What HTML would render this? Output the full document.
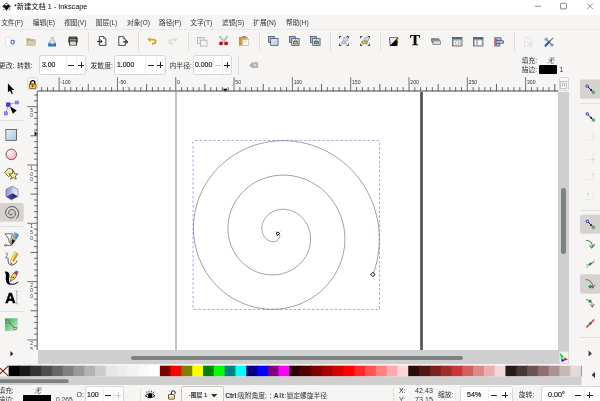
<!DOCTYPE html>
<html lang="zh-CN"><head><meta charset="utf-8"><title>*新建文档 1 - Inkscape</title>
<style>
html,body{margin:0;padding:0;}
body{width:600px;height:401px;overflow:hidden;background:#f6f5f4;font-family:"Liberation Sans","Noto Sans CJK SC",sans-serif;position:relative;}
.t{position:absolute;white-space:nowrap;line-height:10px;height:10px;}
.a{position:absolute;}
.sp{position:absolute;background:#fff;border:0.5px solid #d9d7d5;border-radius:2.4px;box-sizing:border-box;}
.vs{position:absolute;width:0.6px;background:#dfdcd9;}
.hs{position:absolute;height:0.5px;background:#d8d4d0;}
svg{position:absolute;overflow:visible;}
#w{position:absolute;left:0;top:0;width:600px;height:401px;overflow:hidden;will-change:transform;}
</style></head><body><div id="w">

<div class="a" style="left:0;top:0;width:600px;height:14.5px;background:#fff"></div>
<svg style="left:1.5px;top:2px" width="9" height="9" viewBox="0 0 18 18">
<path d="M9 0.8 L1 8.6 Q0.3 10 2 10.6 L5 11.4 Q7 12 5.6 13 Q4.6 14 6.6 14.6 L9 16 L11.6 14.4 Q13 13.6 12 12.8 Q11 11.8 13 11.4 L16 10.6 Q17.8 10 17 8.6 Z" fill="#111"/>
<path d="M9 2.4 L5.2 6 L7 7 L8 6.2 L9.2 7.2 L10.6 6 L12.6 6.6 Z" fill="#fff"/>
<ellipse cx="14.8" cy="14.2" rx="2" ry="1" fill="#111"/><ellipse cx="3.4" cy="14.6" rx="1.6" ry="0.8" fill="#111"/><ellipse cx="9" cy="17.2" rx="1.6" ry="0.7" fill="#111"/>
</svg>
<div class="t " style="left:14px;top:1.5999999999999996px;font-size:7.25px;color:#000;">*新建文档 1 - Inkscape</div>
<svg style="left:0;top:0" width="600" height="15" viewBox="0 0 600 15"><path d="M535 6.3 H541" stroke="#333" stroke-width="0.55"/><rect x="560.5" y="3.3" width="5.9" height="5.6" rx="0.9" fill="none" stroke="#333" stroke-width="0.6"/><path d="M587.2 3.4 L592.9 9.1 M592.9 3.4 L587.2 9.1" stroke="#333" stroke-width="0.55" fill="none"/></svg>
<div class="t " style="left:1.2px;top:17.6px;font-size:6.7px;color:#2e3436;">文件(F)</div>
<div class="t " style="left:32.8px;top:17.6px;font-size:6.7px;color:#2e3436;">编辑(E)</div>
<div class="t " style="left:64.2px;top:17.6px;font-size:6.7px;color:#2e3436;">视图(V)</div>
<div class="t " style="left:95.8px;top:17.6px;font-size:6.7px;color:#2e3436;">图层(L)</div>
<div class="t " style="left:127px;top:17.6px;font-size:6.7px;color:#2e3436;">对象(O)</div>
<div class="t " style="left:159px;top:17.6px;font-size:6.7px;color:#2e3436;">路径(P)</div>
<div class="t " style="left:190.3px;top:17.6px;font-size:6.7px;color:#2e3436;">文字(T)</div>
<div class="t " style="left:222px;top:17.6px;font-size:6.7px;color:#2e3436;">滤镜(S)</div>
<div class="t " style="left:253.3px;top:17.6px;font-size:6.7px;color:#2e3436;">扩展(N)</div>
<div class="t " style="left:286px;top:17.6px;font-size:6.7px;color:#2e3436;">帮助(H)</div>
<div class="hs" style="left:0;top:29px;width:600px;background:#ebe9e7"></div>
<svg style="left:4.800000000000001px;top:36.5px" width="10" height="10" viewBox="0 0 10 10"><path d="M0.5 0.6 H5.2 L7.6 3 V9.2 H0.5 Z" fill="#fff" stroke="#d2d2d2" stroke-width="0.55"/><path d="M5.2 0.6 V3 H7.6" fill="none" stroke="#dadada" stroke-width="0.4"/>
<circle cx="7.7" cy="5.1" r="2.3" fill="#3a6ec4"/><path d="M7.7 3.5 V6.7 M6.1 5.1 H9.3" stroke="#fff" stroke-width="0.85"/></svg>
<svg style="left:25.8px;top:36.5px" width="10" height="10" viewBox="0 0 10 10"><path d="M0.5 1.2 H4 L4.8 2.2 H9.4 V9 H0.5 Z" fill="#c4a77d"/>
<path d="M0.5 9 L1.6 3.8 H9.6 L9.4 9 Z" fill="#d9c3a0"/><rect x="3" y="4.6" width="5" height="2.2" fill="#cfcfcf" opacity="0.8"/></svg>
<svg style="left:46.8px;top:36.5px" width="10" height="10" viewBox="0 0 10 10"><path d="M1.1 5.8 H9 V9.5 H1.1 Z" fill="#3572c6"/><path d="M1.8 5.8 H8.3 V7 H1.8 Z" fill="#6b9be0"/>
<path d="M4.1 0.5 H6.3 V4 H8.2 L5.2 7.4 L2.2 4 H4.1 Z" fill="#e9e9e9" stroke="#9a9a9a" stroke-width="0.55"/></svg>
<svg style="left:67.95px;top:36.4px" width="10" height="10" viewBox="0 0 10 10"><rect x="0.7" y="0.4" width="8.6" height="1.9" rx="0.4" fill="#3a3a3a"/><rect x="2.6" y="0.9" width="4.8" height="0.6" fill="#8a8a8a"/>
<rect x="0.3" y="2.1" width="9.4" height="4.4" rx="0.5" fill="#2b2b2b"/><rect x="1.5" y="2.8" width="7" height="1.7" fill="#909090"/>
<rect x="1.1" y="5" width="7.8" height="4.6" rx="0.4" fill="#2b2b2b"/><rect x="2.2" y="5.5" width="5.6" height="3.3" fill="#f3f7ee"/><rect x="3.4" y="6" width="3.2" height="1.7" fill="#b9dca6"/></svg>
<div class="vs" style="left:87.5px;top:32px;height:19px"></div>
<svg style="left:97.2px;top:36.2px" width="10" height="10" viewBox="0 0 10 10"><path d="M2.4 0.6 H6.8 L8.9 2.7 V9.4 H2.4 Z" fill="#fdfdfd" stroke="#1c1c1c" stroke-width="0.8"/><path d="M6.6 0.8 V2.9 H8.7" fill="none" stroke="#1c1c1c" stroke-width="0.5"/>
<path d="M0 5.4 H5 M3.4 3.7 L5.2 5.4 L3.4 7.1" stroke="#0c0c0c" stroke-width="0.9" fill="none"/></svg>
<svg style="left:117.8px;top:36.2px" width="10" height="10" viewBox="0 0 10 10"><path d="M0.8 0.6 H5.2 L7.3 2.7 V9.4 H0.8 Z" fill="#fdfdfd" stroke="#1c1c1c" stroke-width="0.8"/><path d="M5 0.8 V2.9 H7.1" fill="none" stroke="#1c1c1c" stroke-width="0.5"/>
<path d="M4.8 5.9 H9.6 M8.1 4.2 L9.9 5.9 L8.1 7.6" stroke="#0c0c0c" stroke-width="0.9" fill="none"/></svg>
<div class="vs" style="left:138px;top:32px;height:19px"></div>
<svg style="left:147.0px;top:37.4px" width="10" height="8" viewBox="0 0 10 8"><path d="M0.3 2.6 L3.6 0.2 V1.8 H6.4 Q9.6 1.8 9.6 4.6 Q9.6 7.4 6.4 7.4 H5 V5.6 H6.2 Q7.6 5.6 7.6 4.6 Q7.6 3.6 6.2 3.6 H3.6 V5.2 Z" fill="#d0ac28"/></svg>
<svg style="left:167.8px;top:37.4px" width="10" height="8" viewBox="0 0 10 8"><path d="M9.7 2.6 L6.4 0.2 V1.8 H3.6 Q0.4 1.8 0.4 4.6 Q0.4 7.4 3.6 7.4 H5 V5.6 H3.8 Q2.4 5.6 2.4 4.6 Q2.4 3.6 3.8 3.6 H6.4 V5.2 Z" fill="#d4e6c8"/></svg>
<div class="vs" style="left:187.6px;top:32px;height:19px"></div>
<svg style="left:196.9px;top:36.5px" width="10.4" height="9.4" viewBox="0 0 10.4 9.4"><rect x="0.4" y="0.4" width="6.6" height="6.2" fill="#f1f1f1" stroke="#a4a4a4" stroke-width="0.7"/><path d="M1.8 2 H5.4 M1.8 3.4 H3.4" stroke="#bdbdbd" stroke-width="0.5"/>
<rect x="3.4" y="3.2" width="6.6" height="5.9" fill="#f6f6f6" stroke="#a4a4a4" stroke-width="0.7"/></svg>
<svg style="left:217.5px;top:36.4px" width="11" height="10" viewBox="0 0 11 10"><path d="M1.5 0.4 L6.4 6.2 M9.5 0.4 L4.6 6.2" stroke="#969696" stroke-width="1.7"/><path d="M1.6 0.5 L6.2 6 M9.4 0.5 L4.8 6" stroke="#f0f0f0" stroke-width="0.8"/>
<circle cx="3" cy="7.4" r="1.95" fill="#c20f1e"/><circle cx="8.1" cy="7.4" r="1.95" fill="#c20f1e"/></svg>
<svg style="left:239.2px;top:36.4px" width="10" height="10" viewBox="0 0 10 10"><rect x="0.1" y="0.9" width="8.6" height="8.7" rx="0.6" fill="#dba24e"/><rect x="0.1" y="0.9" width="1.6" height="8.7" fill="#c48a38"/><rect x="3.2" y="0.1" width="3.6" height="2" rx="0.4" fill="#8d8d8d"/>
<rect x="3.4" y="3.3" width="6.4" height="6.2" fill="#fbfbfb" stroke="#9a9a9a" stroke-width="0.45"/><path d="M4.8 5.2 H8.2 M4.8 6.6 H7" stroke="#b8b8b8" stroke-width="0.5"/></svg>
<div class="vs" style="left:258.8px;top:32px;height:19px"></div>
<svg style="left:267.90000000000003px;top:36.300000000000004px" width="10.4" height="9.8" viewBox="0 0 10.4 9.8"><defs><linearGradient id="dpg" x1="0" y1="0" x2="1" y2="1"><stop offset="0" stop-color="#e3ecf6"/><stop offset="1" stop-color="#b4c8e2"/></linearGradient></defs><rect x="0.4" y="0.4" width="5.9" height="6.2" fill="#a7bbd5" stroke="#465264" stroke-width="0.75"/><rect x="2.7" y="2.4" width="7.4" height="7" fill="url(#dpg)" stroke="#465264" stroke-width="0.75"/></svg>
<svg style="left:289.0px;top:36.300000000000004px" width="10.4" height="9.8" viewBox="0 0 10.4 9.8"><defs><linearGradient id="dpg" x1="0" y1="0" x2="1" y2="1"><stop offset="0" stop-color="#e3ecf6"/><stop offset="1" stop-color="#b4c8e2"/></linearGradient></defs><rect x="0.4" y="0.4" width="5.9" height="6.2" fill="#a7bbd5" stroke="#465264" stroke-width="0.75"/><rect x="2.7" y="2.4" width="7.4" height="7" fill="url(#dpg)" stroke="#465264" stroke-width="0.75"/><path d="M5.6 5.6 V4.6 Q6.5 3.4 7.4 4.6 V5.6" stroke="#2a2a2a" stroke-width="0.6" fill="none"/><rect x="4.7" y="5.5" width="3.6" height="2.4" fill="#f0c020" stroke="#2a2a2a" stroke-width="0.5"/></svg>
<svg style="left:310.0px;top:36.300000000000004px" width="10.4" height="9.8" viewBox="0 0 10.4 9.8"><defs><linearGradient id="dpg" x1="0" y1="0" x2="1" y2="1"><stop offset="0" stop-color="#e3ecf6"/><stop offset="1" stop-color="#b4c8e2"/></linearGradient></defs><rect x="0.4" y="0.4" width="5.9" height="6.2" fill="#a7bbd5" stroke="#465264" stroke-width="0.75"/><rect x="2.7" y="2.4" width="7.4" height="7" fill="url(#dpg)" stroke="#465264" stroke-width="0.75"/><path d="M5.6 5.6 V4.6 Q6.5 3.4 7.4 4.6" stroke="#2a2a2a" stroke-width="0.6" fill="none"/><rect x="4.7" y="5.5" width="3.6" height="2.4" fill="#7fc240" stroke="#2a2a2a" stroke-width="0.5"/></svg>
<div class="vs" style="left:330px;top:32px;height:19px"></div>
<svg style="left:338.8px;top:36.4px" width="10" height="10" viewBox="0 0 10 10"><path d="M0.5 2.2 V0.5 H2.2 M7.8 0.5 H9.5 V2.2 M9.5 7.8 V9.5 H7.8 M2.2 9.5 H0.5 V7.8" stroke="#1a1a1a" stroke-width="0.85" fill="none"/><path d="M2.2 8 L3.2 5.2 L5.6 5.8 L8 8 Z" fill="#bfd0e6" stroke="#7088a8" stroke-width="0.45"/><circle cx="6.6" cy="3.4" r="2.3" fill="#c9d8ea" stroke="#7088a8" stroke-width="0.5"/></svg>
<svg style="left:360.4px;top:36.4px" width="10" height="10" viewBox="0 0 10 10"><path d="M0.5 2.2 V0.5 H2.2 M7.8 0.5 H9.5 V2.2 M9.5 7.8 V9.5 H7.8 M2.2 9.5 H0.5 V7.8" stroke="#1a1a1a" stroke-width="0.85" fill="none"/><circle cx="6.5" cy="3.4" r="2.3" fill="#c9d8ea" stroke="#7088a8" stroke-width="0.5"/>
<path d="M2 5 H7.2 V7.8 H2 Z" fill="#f0c830" stroke="#5c4a0a" stroke-width="0.55"/></svg>
<div class="vs" style="left:380px;top:32px;height:19px"></div>
<svg style="left:389.1px;top:36.699999999999996px" width="10.4" height="9.2" viewBox="0 0 10.4 9.2"><defs><linearGradient id="fsg" x1="0" y1="0" x2="1" y2="1"><stop offset="0" stop-color="#fff"/><stop offset="0.7" stop-color="#d8d8d8"/><stop offset="1" stop-color="#777"/></linearGradient></defs>
<path d="M0.3 0.4 H9 L8.4 9 H0.9 Z" fill="#0a0a0a"/><path d="M1.1 1.1 H8.2 L1.5 8.2 Z" fill="url(#fsg)"/>
<path d="M7.4 3 L9.4 0.8 L10.3 1.7 L8.3 3.9 Z" fill="#f0b41e"/><path d="M7.4 3 L8.3 3.9 L6.6 4.6 Z" fill="#222"/></svg>
<div class="t" style="left:410.3px;top:33.7px;font-family:'Liberation Serif',serif;font-weight:bold;font-size:13.6px;line-height:14px;height:14px;color:#0a0a0a;-webkit-text-stroke:0.25px #0a0a0a;transform:scaleX(1.12);transform-origin:0 0">T</div>
<svg style="left:431.2px;top:38.0px" width="10" height="7" viewBox="0 0 10 7"><rect x="0.4" y="0.4" width="7.2" height="3.4" fill="#9c9c9c" stroke="#6a6a6a" stroke-width="0.5"/><rect x="1.2" y="1.6" width="7.4" height="3.4" fill="#bcbcbc" stroke="#666" stroke-width="0.5"/>
<rect x="2" y="2.9" width="7.6" height="3.7" fill="#dadada" stroke="#585858" stroke-width="0.6"/></svg>
<svg style="left:452.0px;top:36.8px" width="10.4" height="9.4" viewBox="0 0 10.4 9.4"><rect x="0.4" y="0.4" width="9.6" height="8.6" fill="#e4e4e4" stroke="#4e4e4e" stroke-width="0.7"/><rect x="0.4" y="0.4" width="9.6" height="2.1" fill="#51647d"/>
<rect x="1.6" y="3.2" width="7.2" height="4.8" fill="#fff" stroke="#777" stroke-width="0.4"/><path d="M4.4 4.4 L3.2 5.6 L4.4 6.8 M6 4.4 L7.2 5.6 L6 6.8" stroke="#333" stroke-width="0.6" fill="none"/></svg>
<svg style="left:472.8px;top:36.8px" width="10.4" height="9.4" viewBox="0 0 10.4 9.4"><rect x="0.4" y="0.4" width="9.6" height="8.6" fill="#e4e4e4" stroke="#4e4e4e" stroke-width="0.7"/><rect x="0.4" y="0.4" width="9.6" height="2.1" fill="#51647d"/>
<rect x="1.4" y="3" width="2.2" height="5.4" fill="#fff" stroke="#666" stroke-width="0.4"/><rect x="4.4" y="3" width="4.6" height="5.4" fill="#fff" stroke="#666" stroke-width="0.4"/></svg>
<svg style="left:494.0px;top:36.7px" width="10" height="9.6" viewBox="0 0 10 9.6"><rect x="0.2" y="0.1" width="1.5" height="9.5" fill="#dc5a68"/>
<rect x="2" y="0.8" width="5" height="2.4" fill="#b9cde2" stroke="#2f4260" stroke-width="0.7"/><rect x="2" y="3.8" width="7.4" height="2.4" fill="#b9cde2" stroke="#2f4260" stroke-width="0.7"/><rect x="2" y="6.8" width="3.8" height="2.2" fill="#b9cde2" stroke="#2f4260" stroke-width="0.7"/></svg>
<div class="vs" style="left:513.6px;top:32px;height:19px"></div>
<svg style="left:523.9px;top:36.5px" width="9" height="10" viewBox="0 0 9 10"><path d="M0.6 0.6 H5.6 L8 3 V9.4 H0.6 Z" fill="#f3f3f3" stroke="#d3d3d3" stroke-width="0.5"/><path d="M3 5 L6 8 M5.8 5.6 Q7.4 6.4 6.4 8" stroke="#cfcfcf" stroke-width="0.9" fill="none"/></svg>
<svg style="left:544.4px;top:36.5px" width="10" height="10" viewBox="0 0 10 10"><path d="M2.4 2.4 L7.8 7.8" stroke="#8e8e8e" stroke-width="1.3"/><circle cx="2" cy="2" r="1.7" fill="#8e8e8e"/><path d="M2 2 L0 1 L1 0 Z" fill="#f6f5f4" stroke="#f6f5f4" stroke-width="0.5"/><circle cx="8" cy="8" r="1.6" fill="#8e8e8e"/>
<path d="M9 0.8 L5 5" stroke="#7e7e7e" stroke-width="1.2"/><path d="M5.2 4.8 L1.6 8.6" stroke="#2f62b5" stroke-width="2.3" stroke-linecap="round"/></svg>
<div class="t " style="left:-1.2px;top:60.5px;font-size:6.9px;color:#2e3436;">更改:</div>
<div class="t " style="left:17.1px;top:60.5px;font-size:6.9px;color:#2e3436;">转数:</div>
<div class="sp" style="left:39.3px;top:55.4px;width:47px;height:19.2px"></div><div class="t " style="left:41.5px;top:60.2px;font-size:7.383000000000001px;color:#15191b;transform:scaleX(0.935);transform-origin:0 50%;-webkit-text-stroke:0.18px #15191b;">3.00</div><div class="vs" style="left:66.2px;top:55.9px;height:18.2px;background:#f0eeec"></div><div class="vs" style="left:76.2px;top:55.9px;height:18.2px;background:#f0eeec"></div><div class="a" style="left:68.3px;top:64.75px;width:6px;height:0.95px;background:#222628"></div><div class="a" style="left:78.2px;top:64.75px;width:6px;height:0.95px;background:#222628"></div><div class="a" style="left:80.73px;top:62.22px;width:0.95px;height:6px;background:#222628"></div>
<div class="t " style="left:90.4px;top:60.5px;font-size:6.9px;color:#2e3436;">发散度:</div>
<div class="sp" style="left:114.4px;top:55.4px;width:51.2px;height:19.2px"></div><div class="t " style="left:116.60000000000001px;top:60.2px;font-size:7.383000000000001px;color:#15191b;transform:scaleX(0.935);transform-origin:0 50%;-webkit-text-stroke:0.18px #15191b;">1.000</div><div class="vs" style="left:145.3px;top:55.9px;height:18.2px;background:#f0eeec"></div><div class="vs" style="left:155.7px;top:55.9px;height:18.2px;background:#f0eeec"></div><div class="a" style="left:147.7px;top:64.75px;width:6px;height:0.95px;background:#222628"></div><div class="a" style="left:157.3px;top:64.75px;width:6px;height:0.95px;background:#222628"></div><div class="a" style="left:159.83px;top:62.22px;width:0.95px;height:6px;background:#222628"></div>
<div class="t " style="left:169.4px;top:60.5px;font-size:6.9px;color:#2e3436;">内半径:</div>
<div class="sp" style="left:193.2px;top:55.4px;width:39.3px;height:19.2px"></div><div class="t " style="left:195.2px;top:60.2px;font-size:7.383000000000001px;color:#15191b;transform:scaleX(0.935);transform-origin:0 50%;-webkit-text-stroke:0.18px #15191b;">0.000</div><div class="vs" style="left:213.2px;top:55.9px;height:18.2px;background:#f0eeec"></div><div class="vs" style="left:222.3px;top:55.9px;height:18.2px;background:#f0eeec"></div><div class="a" style="left:214.7px;top:64.75px;width:6px;height:0.95px;background:#c9c9c9"></div><div class="a" style="left:224.3px;top:64.75px;width:6px;height:0.95px;background:#222628"></div><div class="a" style="left:226.83px;top:62.22px;width:0.95px;height:6px;background:#222628"></div>
<div class="vs" style="left:238.2px;top:56px;height:18.6px"></div>
<svg style="left:248.65px;top:62.349999999999994px" width="9.4" height="6.4" viewBox="0 0 9.4 6.4"><path d="M0.2 3.2 L3 0.3 H8.6 Q9.2 0.3 9.2 0.9 V5.5 Q9.2 6.1 8.6 6.1 H3 Z" fill="#b2b2b2"/><path d="M4.6 1.8 L7.4 4.6 M7.4 1.8 L4.6 4.6" stroke="#f6f5f4" stroke-width="0.8"/></svg>
<div class="t " style="left:521.8px;top:55.7px;font-size:6.7px;color:#2e3436;">填充:</div>
<div class="t " style="left:548px;top:55.5px;font-size:6.7px;color:#2e3436;transform:skewX(-18deg);">无</div>
<div class="t " style="left:521.8px;top:64.6px;font-size:6.7px;color:#2e3436;">描边:</div>
<div class="a" style="left:539px;top:65px;width:18px;height:9.2px;background:#000;border-radius:1px"></div>
<div class="t " style="left:559.4px;top:64.6px;font-size:6.7px;color:#2e3436;">1</div>
<div class="a" style="left:37.6px;top:91.6px;width:520.8px;height:258.54999999999995px;background:#fff"></div>
<div class="a" style="left:27.3px;top:77.3px;width:10.3px;height:13.2px;background:#f9f8f7;border:0.5px solid #ddd9d5;border-radius:1.8px;box-sizing:border-box"></div>
<svg style="left:28.650000000000002px;top:79.64999999999999px" width="7.4" height="8.8" viewBox="0 0 7.4 8.8"><defs><linearGradient id="lkg" x1="0" y1="0" x2="0" y2="1"><stop offset="0" stop-color="#e48a0c"/><stop offset="1" stop-color="#ffe95e"/></linearGradient></defs><path d="M1.5 4.2 V3 A2.2 2.3 0 0 1 5.9 3 V4.2" stroke="#0c0c0c" stroke-width="1.3" fill="none"/><rect x="0.4" y="3.8" width="6.6" height="4.7" rx="0.5" fill="url(#lkg)" stroke="#33270a" stroke-width="0.6"/><rect x="3.3" y="5" width="0.8" height="2.1" fill="#1e1603"/></svg>
<svg style="left:0;top:0;font-family:'Liberation Sans',sans-serif" width="600" height="401" viewBox="0 0 600 401"><path d="M37.6 91.0 H558.4" stroke="#2e3436" stroke-width="0.9"/><path d="M41.63 87.1 V91 M47.46 87.1 V91 M53.29 87.1 V91 M64.95 87.1 V91 M70.78 87.1 V91 M76.61 87.1 V91 M82.45 87.1 V91 M94.11 87.1 V91 M99.94 87.1 V91 M105.77 87.1 V91 M111.60 87.1 V91 M123.27 87.1 V91 M129.10 87.1 V91 M134.93 87.1 V91 M140.76 87.1 V91 M152.42 87.1 V91 M158.26 87.1 V91 M164.09 87.1 V91 M169.92 87.1 V91 M181.58 87.1 V91 M187.41 87.1 V91 M193.24 87.1 V91 M199.08 87.1 V91 M210.74 87.1 V91 M216.57 87.1 V91 M222.40 87.1 V91 M228.23 87.1 V91 M239.90 87.1 V91 M245.73 87.1 V91 M251.56 87.1 V91 M257.39 87.1 V91 M269.05 87.1 V91 M274.89 87.1 V91 M280.72 87.1 V91 M286.55 87.1 V91 M298.21 87.1 V91 M304.04 87.1 V91 M309.87 87.1 V91 M315.71 87.1 V91 M327.37 87.1 V91 M333.20 87.1 V91 M339.03 87.1 V91 M344.86 87.1 V91 M356.53 87.1 V91 M362.36 87.1 V91 M368.19 87.1 V91 M374.02 87.1 V91 M385.68 87.1 V91 M391.52 87.1 V91 M397.35 87.1 V91 M403.18 87.1 V91 M414.84 87.1 V91 M420.67 87.1 V91 M426.50 87.1 V91 M432.34 87.1 V91 M444.00 87.1 V91 M449.83 87.1 V91 M455.66 87.1 V91 M461.49 87.1 V91 M473.16 87.1 V91 M478.99 87.1 V91 M484.82 87.1 V91 M490.65 87.1 V91 M502.31 87.1 V91 M508.15 87.1 V91 M513.98 87.1 V91 M519.81 87.1 V91 M531.47 87.1 V91 M537.30 87.1 V91 M543.13 87.1 V91 M548.97 87.1 V91" stroke="#2e3436" stroke-width="0.7"/><path d="M88.28 84 V91 M146.59 84 V91 M204.91 84 V91 M263.22 84 V91 M321.54 84 V91 M379.85 84 V91 M438.17 84 V91 M496.48 84 V91 M554.80 84 V91" stroke="#2e3436" stroke-width="0.75"/><path d="M59.12 77.2 V91 M117.44 77.2 V91 M175.75 77.2 V91 M234.06 77.2 V91 M292.38 77.2 V91 M350.69 77.2 V91 M409.01 77.2 V91 M467.32 77.2 V91 M525.64 77.2 V91" stroke="#3a4042" stroke-width="0.72"/><text x="60.42" y="83.6" font-size="5.9" fill="#2e3436" textLength="10.27" lengthAdjust="spacingAndGlyphs">-100</text><text x="118.73" y="83.6" font-size="5.9" fill="#2e3436" textLength="7.42" lengthAdjust="spacingAndGlyphs">-50</text><text x="177.05" y="83.6" font-size="5.9" fill="#2e3436" textLength="2.85" lengthAdjust="spacingAndGlyphs">0</text><text x="235.37" y="83.6" font-size="5.9" fill="#2e3436" textLength="5.71" lengthAdjust="spacingAndGlyphs">50</text><text x="293.68" y="83.6" font-size="5.9" fill="#2e3436" textLength="8.56" lengthAdjust="spacingAndGlyphs">100</text><text x="352.00" y="83.6" font-size="5.9" fill="#2e3436" textLength="8.56" lengthAdjust="spacingAndGlyphs">150</text><text x="410.31" y="83.6" font-size="5.9" fill="#2e3436" textLength="8.56" lengthAdjust="spacingAndGlyphs">200</text><text x="468.62" y="83.6" font-size="5.9" fill="#2e3436" textLength="8.56" lengthAdjust="spacingAndGlyphs">250</text><text x="526.94" y="83.6" font-size="5.9" fill="#2e3436" textLength="8.56" lengthAdjust="spacingAndGlyphs">300</text><path d="M37.2 91.1 V350.15" stroke="#4a5052" stroke-width="0.9"/><path d="M34 95.00 H37.4 M34 100.83 H37.4 M34 112.50 H37.4 M34 118.33 H37.4 M34 124.16 H37.4 M34 129.99 H37.4 M34 141.65 H37.4 M34 147.49 H37.4 M34 153.32 H37.4 M34 159.15 H37.4 M34 170.81 H37.4 M34 176.64 H37.4 M34 182.47 H37.4 M34 188.31 H37.4 M34 199.97 H37.4 M34 205.80 H37.4 M34 211.63 H37.4 M34 217.46 H37.4 M34 229.13 H37.4 M34 234.96 H37.4 M34 240.79 H37.4 M34 246.62 H37.4 M34 258.28 H37.4 M34 264.12 H37.4 M34 269.95 H37.4 M34 275.78 H37.4 M34 287.44 H37.4 M34 293.27 H37.4 M34 299.10 H37.4 M34 304.94 H37.4 M34 316.60 H37.4 M34 322.43 H37.4 M34 328.26 H37.4 M34 334.09 H37.4 M34 345.76 H37.4" stroke="#2e3436" stroke-width="0.7"/><path d="M30.6 135.82 H37.4 M30.6 194.14 H37.4 M30.6 252.45 H37.4 M30.6 310.77 H37.4" stroke="#2e3436" stroke-width="0.75"/><path d="M27.3 106.66 H37.4 M27.3 164.98 H37.4 M27.3 223.29 H37.4 M27.3 281.61 H37.4 M27.3 339.93 H37.4" stroke="#3a4042" stroke-width="0.72"/><text x="31.5" y="111.56" font-size="4.9" fill="#2e3436" text-anchor="middle">5</text><text x="31.5" y="117.36" font-size="4.9" fill="#2e3436" text-anchor="middle">0</text><text x="31.5" y="169.88" font-size="4.9" fill="#2e3436" text-anchor="middle">1</text><text x="31.5" y="175.68" font-size="4.9" fill="#2e3436" text-anchor="middle">0</text><text x="31.5" y="181.48" font-size="4.9" fill="#2e3436" text-anchor="middle">0</text><text x="31.5" y="228.19" font-size="4.9" fill="#2e3436" text-anchor="middle">1</text><text x="31.5" y="234.00" font-size="4.9" fill="#2e3436" text-anchor="middle">5</text><text x="31.5" y="239.79" font-size="4.9" fill="#2e3436" text-anchor="middle">0</text><text x="31.5" y="286.51" font-size="4.9" fill="#2e3436" text-anchor="middle">2</text><text x="31.5" y="292.31" font-size="4.9" fill="#2e3436" text-anchor="middle">0</text><text x="31.5" y="298.11" font-size="4.9" fill="#2e3436" text-anchor="middle">0</text><text x="31.5" y="344.82" font-size="4.9" fill="#2e3436" text-anchor="middle">2</text><text x="31.5" y="350.62" font-size="4.9" fill="#2e3436" text-anchor="middle">5</text><text x="31.5" y="356.43" font-size="4.9" fill="#2e3436" text-anchor="middle">0</text><path d="M222.84 88.8 H227.64 L225.24 91.4 Z" fill="#000"/><path d="M34.6 131.26 V136.06 L37.3 133.66 Z" fill="#000"/></svg>
<div class="a" style="left:0;top:349.75px;width:37.6px;height:14.6px;background:#f6f5f4"></div>
<div class="a" style="left:175.2px;top:91.6px;width:1.7px;height:258.54999999999995px;background:#c4c4c4"></div>
<div class="a" style="left:420.1px;top:91.6px;width:2.6px;height:258.54999999999995px;background:linear-gradient(90deg,#9a9a9a,#505050 28%,#505050 72%,#9a9a9a)"></div>
<svg style="left:0;top:0" width="600" height="401" viewBox="0 0 600 401"><path d="M277.80 233.60 L277.93 233.66 L278.06 233.73 L278.18 233.80 L278.30 233.88 L278.42 233.97 L278.53 234.06 L278.64 234.16 L278.74 234.26 L278.84 234.37 L278.93 234.49 L279.02 234.61 L279.10 234.74 L279.18 234.87 L279.24 235.00 L279.31 235.14 L279.37 235.29 L279.42 235.44 L279.46 235.59 L279.50 235.74 L279.53 235.90 L279.55 236.07 L279.56 236.23 L279.57 236.40 L279.57 236.57 L279.56 236.74 L279.55 236.91 L279.52 237.08 L279.49 237.26 L279.45 237.43 L279.41 237.61 L279.35 237.78 L279.29 237.96 L279.21 238.13 L279.13 238.31 L279.05 238.48 L278.95 238.65 L278.85 238.82 L278.73 238.99 L278.61 239.15 L278.48 239.31 L278.35 239.47 L278.20 239.63 L278.05 239.78 L277.89 239.93 L277.72 240.07 L277.55 240.21 L277.37 240.35 L277.18 240.48 L276.98 240.60 L276.78 240.72 L276.57 240.83 L276.35 240.94 L276.13 241.04 L275.90 241.13 L275.66 241.22 L275.42 241.30 L275.17 241.37 L274.92 241.43 L274.67 241.49 L274.40 241.54 L274.14 241.58 L273.87 241.61 L273.59 241.63 L273.31 241.64 L273.03 241.64 L272.74 241.64 L272.46 241.62 L272.16 241.60 L271.87 241.56 L271.58 241.52 L271.28 241.46 L270.98 241.40 L270.68 241.32 L270.38 241.24 L270.08 241.14 L269.78 241.03 L269.48 240.92 L269.18 240.79 L268.88 240.65 L268.59 240.50 L268.29 240.34 L268.00 240.17 L267.71 239.99 L267.42 239.79 L267.14 239.59 L266.86 239.38 L266.58 239.15 L266.31 238.92 L266.04 238.67 L265.78 238.42 L265.52 238.15 L265.27 237.87 L265.03 237.59 L264.79 237.29 L264.56 236.98 L264.33 236.67 L264.11 236.34 L263.91 236.01 L263.71 235.66 L263.51 235.31 L263.33 234.95 L263.16 234.58 L262.99 234.20 L262.84 233.82 L262.69 233.42 L262.56 233.02 L262.44 232.61 L262.32 232.20 L262.22 231.78 L262.13 231.35 L262.06 230.92 L261.99 230.48 L261.94 230.03 L261.90 229.58 L261.87 229.13 L261.85 228.67 L261.85 228.21 L261.86 227.75 L261.89 227.28 L261.93 226.81 L261.98 226.33 L262.05 225.86 L262.13 225.38 L262.22 224.90 L262.33 224.43 L262.45 223.95 L262.59 223.47 L262.74 222.99 L262.91 222.52 L263.09 222.04 L263.29 221.57 L263.50 221.10 L263.73 220.63 L263.97 220.17 L264.23 219.70 L264.50 219.25 L264.78 218.80 L265.08 218.35 L265.40 217.91 L265.72 217.48 L266.07 217.05 L266.42 216.63 L266.80 216.21 L267.18 215.81 L267.58 215.41 L267.99 215.02 L268.42 214.64 L268.86 214.27 L269.31 213.91 L269.77 213.56 L270.25 213.23 L270.74 212.90 L271.24 212.58 L271.76 212.28 L272.28 211.99 L272.82 211.71 L273.36 211.45 L273.92 211.20 L274.49 210.96 L275.06 210.74 L275.65 210.53 L276.24 210.34 L276.85 210.17 L277.46 210.00 L278.08 209.86 L278.70 209.73 L279.34 209.62 L279.98 209.52 L280.62 209.45 L281.28 209.39 L281.93 209.34 L282.59 209.32 L283.26 209.31 L283.93 209.33 L284.60 209.36 L285.28 209.40 L285.95 209.47 L286.63 209.56 L287.31 209.66 L287.99 209.79 L288.67 209.93 L289.35 210.10 L290.03 210.28 L290.70 210.48 L291.38 210.70 L292.05 210.95 L292.72 211.21 L293.38 211.49 L294.04 211.79 L294.70 212.11 L295.34 212.45 L295.99 212.80 L296.62 213.18 L297.25 213.58 L297.87 213.99 L298.48 214.43 L299.09 214.88 L299.68 215.35 L300.26 215.84 L300.83 216.35 L301.40 216.87 L301.94 217.42 L302.48 217.98 L303.01 218.56 L303.52 219.15 L304.01 219.76 L304.49 220.39 L304.96 221.03 L305.41 221.69 L305.85 222.36 L306.27 223.05 L306.67 223.75 L307.06 224.47 L307.42 225.20 L307.77 225.94 L308.10 226.70 L308.42 227.47 L308.71 228.24 L308.98 229.03 L309.23 229.84 L309.46 230.65 L309.67 231.47 L309.86 232.30 L310.03 233.13 L310.17 233.98 L310.30 234.83 L310.40 235.69 L310.47 236.56 L310.53 237.43 L310.56 238.30 L310.57 239.18 L310.55 240.07 L310.51 240.95 L310.45 241.84 L310.36 242.73 L310.24 243.62 L310.11 244.52 L309.95 245.41 L309.76 246.30 L309.55 247.19 L309.31 248.07 L309.05 248.96 L308.77 249.84 L308.46 250.71 L308.12 251.58 L307.76 252.45 L307.38 253.30 L306.97 254.15 L306.54 255.00 L306.08 255.83 L305.60 256.66 L305.10 257.47 L304.57 258.27 L304.02 259.07 L303.44 259.85 L302.84 260.61 L302.22 261.37 L301.58 262.11 L300.91 262.83 L300.23 263.54 L299.52 264.24 L298.79 264.92 L298.04 265.58 L297.27 266.22 L296.48 266.84 L295.67 267.45 L294.84 268.03 L293.99 268.60 L293.13 269.14 L292.25 269.66 L291.35 270.16 L290.43 270.64 L289.50 271.10 L288.55 271.53 L287.59 271.94 L286.62 272.32 L285.63 272.68 L284.63 273.01 L283.62 273.32 L282.59 273.60 L281.56 273.86 L280.51 274.09 L279.46 274.29 L278.39 274.46 L277.32 274.61 L276.24 274.72 L275.16 274.81 L274.07 274.87 L272.97 274.90 L271.87 274.90 L270.77 274.88 L269.66 274.82 L268.55 274.73 L267.44 274.62 L266.34 274.47 L265.23 274.29 L264.12 274.09 L263.02 273.85 L261.91 273.58 L260.82 273.29 L259.72 272.96 L258.64 272.60 L257.55 272.21 L256.48 271.79 L255.41 271.35 L254.36 270.87 L253.31 270.36 L252.27 269.83 L251.25 269.26 L250.23 268.67 L249.23 268.05 L248.25 267.39 L247.28 266.71 L246.32 266.01 L245.38 265.27 L244.45 264.51 L243.55 263.72 L242.66 262.91 L241.79 262.07 L240.95 261.20 L240.12 260.31 L239.31 259.39 L238.53 258.46 L237.77 257.49 L237.03 256.51 L236.32 255.50 L235.63 254.47 L234.97 253.42 L234.33 252.35 L233.72 251.26 L233.14 250.15 L232.59 249.02 L232.06 247.87 L231.56 246.71 L231.10 245.53 L230.66 244.34 L230.25 243.13 L229.88 241.90 L229.54 240.67 L229.23 239.42 L228.95 238.16 L228.70 236.89 L228.49 235.61 L228.31 234.32 L228.16 233.02 L228.05 231.72 L227.97 230.40 L227.93 229.09 L227.92 227.77 L227.95 226.44 L228.01 225.12 L228.11 223.79 L228.24 222.46 L228.41 221.13 L228.62 219.80 L228.86 218.48 L229.13 217.16 L229.45 215.84 L229.79 214.53 L230.18 213.22 L230.60 211.92 L231.05 210.63 L231.54 209.35 L232.07 208.07 L232.63 206.81 L233.22 205.56 L233.85 204.32 L234.52 203.10 L235.21 201.89 L235.94 200.70 L236.71 199.52 L237.51 198.36 L238.34 197.22 L239.20 196.10 L240.09 195.00 L241.02 193.92 L241.98 192.87 L242.96 191.83 L243.98 190.82 L245.02 189.84 L246.10 188.87 L247.20 187.94 L248.33 187.03 L249.48 186.15 L250.66 185.30 L251.87 184.48 L253.10 183.69 L254.36 182.93 L255.63 182.20 L256.93 181.51 L258.25 180.84 L259.59 180.21 L260.96 179.62 L262.33 179.06 L263.73 178.53 L265.15 178.04 L266.58 177.59 L268.02 177.17 L269.48 176.79 L270.95 176.45 L272.44 176.15 L273.94 175.89 L275.44 175.66 L276.96 175.47 L278.48 175.33 L280.01 175.22 L281.55 175.16 L283.09 175.13 L284.64 175.15 L286.18 175.20 L287.73 175.30 L289.28 175.44 L290.83 175.62 L292.38 175.84 L293.93 176.11 L295.47 176.41 L297.01 176.76 L298.54 177.14 L300.06 177.57 L301.58 178.04 L303.08 178.55 L304.58 179.10 L306.06 179.70 L307.54 180.33 L308.99 181.00 L310.44 181.71 L311.86 182.47 L313.27 183.26 L314.66 184.09 L316.04 184.96 L317.39 185.86 L318.72 186.81 L320.03 187.79 L321.31 188.81 L322.57 189.86 L323.81 190.95 L325.02 192.07 L326.20 193.23 L327.35 194.42 L328.47 195.65 L329.57 196.90 L330.63 198.19 L331.66 199.51 L332.66 200.86 L333.62 202.23 L334.55 203.64 L335.45 205.07 L336.30 206.53 L337.12 208.01 L337.91 209.52 L338.65 211.05 L339.36 212.61 L340.02 214.18 L340.65 215.78 L341.23 217.40 L341.78 219.03 L342.28 220.68 L342.73 222.35 L343.15 224.03 L343.52 225.73 L343.85 227.44 L344.13 229.16 L344.37 230.89 L344.56 232.63 L344.70 234.38 L344.80 236.14 L344.86 237.90 L344.87 239.67 L344.83 241.44 L344.74 243.21 L344.61 244.98 L344.43 246.76 L344.20 248.53 L343.93 250.30 L343.61 252.06 L343.24 253.82 L342.82 255.57 L342.36 257.31 L341.85 259.05 L341.30 260.77 L340.69 262.49 L340.05 264.19 L339.35 265.87 L338.61 267.54 L337.82 269.20 L336.99 270.83 L336.12 272.45 L335.20 274.05 L334.24 275.62 L333.23 277.17 L332.18 278.70 L331.09 280.20 L329.96 281.68 L328.79 283.13 L327.57 284.55 L326.32 285.94 L325.03 287.30 L323.70 288.63 L322.33 289.92 L320.93 291.19 L319.49 292.41 L318.01 293.60 L316.51 294.76 L314.97 295.87 L313.39 296.95 L311.79 297.99 L310.16 298.98 L308.50 299.94 L306.81 300.85 L305.09 301.72 L303.35 302.55 L301.58 303.33 L299.79 304.06 L297.98 304.75 L296.14 305.40 L294.29 305.99 L292.42 306.54 L290.53 307.04 L288.62 307.49 L286.70 307.89 L284.76 308.24 L282.82 308.54 L280.86 308.79 L278.89 308.99 L276.92 309.14 L274.93 309.23 L272.95 309.27 L270.95 309.26 L268.96 309.20 L266.96 309.09 L264.97 308.92 L262.97 308.70 L260.98 308.43 L258.99 308.10 L257.01 307.72 L255.03 307.29 L253.07 306.80 L251.11 306.27 L249.16 305.68 L247.23 305.03 L245.31 304.34 L243.41 303.59 L241.52 302.80 L239.65 301.95 L237.80 301.05 L235.97 300.10 L234.16 299.10 L232.38 298.06 L230.62 296.96 L228.89 295.82 L227.19 294.63 L225.51 293.39 L223.87 292.11 L222.26 290.78 L220.68 289.40 L219.13 287.99 L217.62 286.53 L216.14 285.03 L214.70 283.48 L213.30 281.90 L211.94 280.28 L210.63 278.62 L209.35 276.92 L208.11 275.19 L206.92 273.42 L205.78 271.62 L204.68 269.79 L203.63 267.92 L202.62 266.02 L201.66 264.10 L200.76 262.15 L199.90 260.17 L199.09 258.16 L198.34 256.13 L197.64 254.08 L196.99 252.00 L196.39 249.91 L195.85 247.80 L195.37 245.67 L194.94 243.53 L194.56 241.37 L194.24 239.19 L193.98 237.01 L193.78 234.82 L193.63 232.62 L193.54 230.41 L193.51 228.19 L193.54 225.98 L193.62 223.76 L193.77 221.54 L193.97 219.32 L194.23 217.10 L194.55 214.89 L194.93 212.68 L195.37 210.48 L195.86 208.28 L196.42 206.10 L197.03 203.93 L197.70 201.77 L198.43 199.63 L199.22 197.51 L200.06 195.40 L200.96 193.31 L201.91 191.24 L202.92 189.20 L203.99 187.17 L205.11 185.18 L206.29 183.21 L207.51 181.27 L208.79 179.36 L210.13 177.48 L211.51 175.63 L212.95 173.82 L214.43 172.04 L215.96 170.30 L217.54 168.60 L219.17 166.93 L220.84 165.31 L222.56 163.73 L224.32 162.19 L226.13 160.70 L227.97 159.25 L229.86 157.85 L231.78 156.50 L233.75 155.20 L235.75 153.94 L237.78 152.74 L239.85 151.59 L241.96 150.49 L244.09 149.45 L246.26 148.46 L248.45 147.53 L250.67 146.65 L252.91 145.83 L255.18 145.07 L257.48 144.37 L259.79 143.73 L262.13 143.15 L264.48 142.63 L266.85 142.16 L269.23 141.77 L271.63 141.43 L274.04 141.16 L276.46 140.95 L278.88 140.80 L281.32 140.71 L283.76 140.69 L286.20 140.74 L288.65 140.85 L291.09 141.02 L293.53 141.26 L295.97 141.56 L298.41 141.93 L300.84 142.36 L303.26 142.86 L305.66 143.42 L308.06 144.04 L310.45 144.73 L312.81 145.48 L315.16 146.29 L317.50 147.17 L319.81 148.11 L322.10 149.11 L324.37 150.17 L326.61 151.30 L328.82 152.48 L331.01 153.73 L333.16 155.03 L335.29 156.39 L337.38 157.81 L339.43 159.28 L341.45 160.81 L343.43 162.40 L345.37 164.04 L347.28 165.73 L349.13 167.47 L350.95 169.27 L352.72 171.11 L354.44 173.01 L356.12 174.95 L357.74 176.93 L359.32 178.97 L360.84 181.04 L362.31 183.16 L363.73 185.32 L365.09 187.52 L366.40 189.75 L367.64 192.03 L368.83 194.34 L369.96 196.68 L371.03 199.06 L372.04 201.46 L372.99 203.90 L373.87 206.36 L374.69 208.85 L375.45 211.36 L376.14 213.90 L376.76 216.45 L377.32 219.03 L377.81 221.62 L378.23 224.23 L378.58 226.85 L378.87 229.49 L379.09 232.13 L379.23 234.79 L379.31 237.45 L379.32 240.11 L379.26 242.78 L379.13 245.45 L378.92 248.12 L378.65 250.78 L378.31 253.45 L377.89 256.10 L377.41 258.75 L376.86 261.39 L376.23 264.01 L375.54 266.63 L374.78 269.22 L373.94 271.80 L373.04 274.36" fill="none" stroke="#000" stroke-width="0.38"/><path d="M193.07 140.45 H379.5" fill="none" stroke="#5252e2" stroke-width="0.52" stroke-dasharray="2.5 2.04" stroke-dashoffset="2.46"/><path d="M193.07 140.45 V309.45" fill="none" stroke="#5252e2" stroke-width="0.52" stroke-dasharray="2.5 2.04" stroke-dashoffset="3.59"/><path d="M379.5 309.45 H193.07" fill="none" stroke="#5252e2" stroke-width="0.52" stroke-dasharray="2.5 2.04" stroke-dashoffset="3.09"/><path d="M379.5 309.45 V140.45" fill="none" stroke="#5252e2" stroke-width="0.52" stroke-dasharray="2.5 2.04" stroke-dashoffset="3.74"/><path d="M276.2 233.6 L277.8 232.0 L279.40000000000003 233.6 L277.8 235.2 Z" fill="#fff" stroke="#000" stroke-width="0.95"/><path d="M274.8 231.0 L280.8 236.2 M280.8 231.0 L274.8 236.2" stroke="#555" stroke-width="0.3"/><path d="M276.2 233.6 L277.8 232.0 L279.40000000000003 233.6 L277.8 235.2 Z" fill="#fff" stroke="#000" stroke-width="0.95"/><path d="M370.75 274.4 L372.9 272.25 L375.04999999999995 274.4 L372.9 276.54999999999995 Z" fill="#fff" stroke="#000" stroke-width="0.95"/></svg>
<div class="a" style="left:558.4px;top:91.6px;width:10.4px;height:272.54999999999995px;background:#cfcfcf"></div>
<div class="a" style="left:37.6px;top:350.15px;width:531.0px;height:14.2px;background:#cfcfcf"></div>
<div class="a" style="left:561.2px;top:188.2px;width:4.8px;height:65.4px;background:#7c8182;border-radius:2.2px"></div>
<div class="a" style="left:131.3px;top:355.7px;width:331.4px;height:4.3px;background:#7c8182;border-radius:2.2px"></div>
<div class="a" style="left:558.9px;top:77.4px;width:10.1px;height:13.8px;background:#f7f6f5;border:0.5px solid #d6d2ce;border-radius:2px;box-sizing:border-box"></div>
<div class="a" style="left:560.1px;top:81px;width:7.3px;height:7.5px;background:linear-gradient(#f2f2f2,#fff);border:0.5px solid #c4c4c4;box-sizing:border-box"></div>
<svg style="left:561.8px;top:82.6px" width="3.4" height="4" viewBox="0 0 3.4 4"><path d="M0.6 3.8 V1.4 Q0.6 0.4 1.7 0.4 Q2.8 0.4 2.8 1.4 V3.8" fill="none" stroke="#8c8c8c" stroke-width="0.7"/></svg>
<div class="a" style="left:558.9px;top:351.2px;width:9.8px;height:13.2px;background:#f4f3f1;border:0.5px solid #dedad6;border-radius:1.8px;box-sizing:border-box"></div>
<div class="a" style="left:559.6px;top:352.8px;width:8.4px;height:9.6px;clip-path:polygon(4% 3%, 96% 70%, 24% 96%);background:radial-gradient(circle at 42% 58%, rgba(255,255,255,0.75), rgba(255,255,255,0) 32%),conic-gradient(from 329deg at 42% 58%, #00d800 0deg, #f4ee00 68deg, #f00000 137deg, #f000f0 185deg, #0000e0 233deg, #00e8e8 297deg, #00d800 360deg)"></div>
<svg style="left:0;top:0" width="40" height="401" viewBox="0 0 40 401"><path d="M7.9 83.6 V92.6 L10 90.6 L11.6 94 L12.9 93.4 L11.4 90.1 L14.2 90 Z" fill="#000"/><path d="M5.9 113.4 L8.3 104.6 L16.9 102.5" fill="none" stroke="#a4a4a4" stroke-width="0.9"/><rect x="6.2" y="102.5" width="4.2" height="4.2" fill="#2222f2"/><rect x="7.4" y="103.7" width="1.8" height="1.8" fill="#5a5aff"/><rect x="15.3" y="101" width="3.2" height="3" fill="#8c8cff" stroke="#5050ff" stroke-width="0.5"/><rect x="4.2" y="111.8" width="3.3" height="3.2" fill="#8c8cff" stroke="#5050ff" stroke-width="0.5"/><path d="M9.8 106.2 L12.9 113.7 L16.7 110.6 Z" fill="#000"/><path d="M0 120.5 H24" stroke="#dbd8d5" stroke-width="0.8"/><defs><linearGradient id="gr" x1="0" y1="0" x2="1" y2="1"><stop offset="0" stop-color="#eef3fa"/><stop offset="1" stop-color="#a9c3e4"/></linearGradient><radialGradient id="ge" cx="0.4" cy="0.35" r="0.7"><stop offset="0" stop-color="#fff1f2"/><stop offset="1" stop-color="#f4a9b3"/></radialGradient><linearGradient id="gg" x1="0" y1="0" x2="1" y2="1"><stop offset="0" stop-color="#2fa745"/><stop offset="1" stop-color="#d9f0dc"/></linearGradient></defs><rect x="5.9" y="129.5" width="10.7" height="10.8" fill="url(#gr)" stroke="#3a3a3a" stroke-width="0.7"/><circle cx="11.3" cy="154.4" r="5.3" fill="url(#ge)" stroke="#3a3a3a" stroke-width="0.7"/><path d="M8.6 168.2 L12.6 169.6 L12.8 174 L8.4 176.6 L5 172.4 Z" fill="#f3ec9c" stroke="#4e4612" stroke-width="0.8" stroke-linejoin="round"/><path d="M8.7 169.6 L11.4 170.6 L11.4 173 L8.4 174.8 L6.4 172.2 Z" fill="none" stroke="#fbf8d4" stroke-width="0.7"/><path d="M13.40 170.70 L14.58 173.78 L17.87 173.95 L15.30 176.02 L16.16 179.20 L13.40 177.40 L10.64 179.20 L11.50 176.02 L8.93 173.95 L12.22 173.78 Z" fill="#f8f3a0" stroke="#4e4612" stroke-width="0.8" stroke-linejoin="round"/><defs><linearGradient id="gb1" x1="0" y1="0" x2="1" y2="0.6"><stop offset="0" stop-color="#8a8ad2"/><stop offset="1" stop-color="#bdbdec"/></linearGradient><linearGradient id="gb2" x1="0" y1="0" x2="1" y2="1"><stop offset="0" stop-color="#c2c2ee"/><stop offset="1" stop-color="#f6f6fe"/></linearGradient><linearGradient id="gb3" x1="0" y1="0" x2="1" y2="0"><stop offset="0" stop-color="#6262b6"/><stop offset="0.6" stop-color="#2c2c86"/></linearGradient></defs><path d="M12.3 186.2 L6 189.3 V196.5 L12.5 193.2 Z" fill="url(#gb1)"/><path d="M12.3 186.2 L18 189.5 V196.3 L12.5 193.2 Z" fill="url(#gb2)"/><path d="M12.5 193.2 L6 196.5 L11.3 199.8 L18 196.3 Z" fill="url(#gb3)"/><path d="M12.3 186.2 L18 189.5 V196.3 L11.3 199.8 L6 196.5 V189.3 Z" fill="none" stroke="#4c4c62" stroke-width="0.5"/><rect x="-3" y="203.1" width="26.7" height="18.7" rx="2.4" fill="#d6d2ce"/><path d="M12.39 213.34 L12.39 213.42 L12.39 213.50 L12.39 213.59 L12.37 213.67 L12.35 213.76 L12.33 213.84 L12.30 213.93 L12.26 214.01 L12.21 214.10 L12.16 214.18 L12.09 214.26 L12.03 214.33 L11.95 214.41 L11.87 214.48 L11.79 214.54 L11.70 214.60 L11.60 214.65 L11.50 214.70 L11.39 214.74 L11.28 214.77 L11.16 214.80 L11.04 214.82 L10.92 214.83 L10.79 214.83 L10.67 214.82 L10.54 214.81 L10.41 214.79 L10.28 214.75 L10.15 214.71 L10.03 214.66 L9.90 214.60 L9.78 214.53 L9.66 214.45 L9.55 214.36 L9.44 214.26 L9.33 214.15 L9.24 214.04 L9.14 213.92 L9.06 213.79 L8.98 213.65 L8.92 213.51 L8.86 213.36 L8.81 213.20 L8.77 213.04 L8.74 212.88 L8.72 212.71 L8.71 212.54 L8.72 212.37 L8.73 212.20 L8.76 212.02 L8.80 211.85 L8.85 211.67 L8.91 211.50 L8.99 211.33 L9.07 211.17 L9.17 211.01 L9.28 210.85 L9.40 210.70 L9.54 210.56 L9.68 210.43 L9.83 210.30 L10.00 210.18 L10.17 210.08 L10.35 209.98 L10.54 209.89 L10.73 209.82 L10.93 209.76 L11.14 209.71 L11.35 209.68 L11.57 209.65 L11.78 209.65 L12.01 209.65 L12.23 209.68 L12.45 209.71 L12.67 209.76 L12.89 209.83 L13.10 209.91 L13.32 210.01 L13.52 210.12 L13.72 210.24 L13.92 210.38 L14.11 210.53 L14.28 210.70 L14.45 210.88 L14.61 211.07 L14.75 211.27 L14.89 211.48 L15.01 211.70 L15.11 211.93 L15.20 212.17 L15.28 212.42 L15.34 212.67 L15.38 212.93 L15.41 213.20 L15.42 213.46 L15.42 213.73 L15.39 214.00 L15.35 214.27 L15.29 214.54 L15.21 214.81 L15.11 215.07 L15.00 215.33 L14.87 215.58 L14.72 215.82 L14.56 216.06 L14.38 216.28 L14.18 216.50 L13.97 216.70 L13.74 216.89 L13.50 217.06 L13.25 217.23 L12.99 217.37 L12.71 217.50 L12.43 217.61 L12.14 217.71 L11.84 217.78 L11.53 217.84 L11.22 217.88 L10.90 217.89 L10.59 217.89 L10.27 217.86 L9.95 217.82 L9.63 217.75 L9.32 217.66 L9.01 217.56 L8.71 217.43 L8.41 217.28 L8.12 217.11 L7.85 216.92 L7.58 216.71 L7.33 216.49 L7.09 216.25 L6.86 215.99 L6.65 215.71 L6.46 215.42 L6.28 215.12 L6.13 214.80 L5.99 214.48 L5.88 214.14 L5.78 213.79 L5.71 213.44 L5.66 213.08 L5.64 212.72 L5.64 212.35 L5.66 211.99 L5.70 211.62 L5.77 211.25 L5.87 210.89 L5.99 210.54 L6.13 210.19 L6.29 209.84 L6.48 209.51 L6.69 209.19 L6.92 208.88 L7.17 208.58 L7.44 208.30 L7.73 208.04 L8.04 207.79 L8.37 207.57 L8.71 207.36 L9.06 207.18 L9.43 207.02 L9.81 206.88 L10.20 206.76 L10.60 206.67 L11.00 206.61 L11.41 206.57 L11.83 206.56 L12.25 206.58 L12.66 206.62 L13.08 206.69 L13.49 206.79 L13.89 206.91 L14.29 207.06 L14.68 207.24 L15.06 207.44 L15.43 207.67 L15.79 207.92 L16.12 208.20 L16.45 208.49 L16.75 208.81 L17.03 209.15 L17.30 209.51 L17.53 209.89 L17.75 210.29 L17.94 210.69 L18.11 211.12 L18.24 211.55 L18.35 211.99 L18.44 212.44 L18.49 212.90 L18.51 213.37 L18.50 213.83 L18.47 214.30 L18.40 214.76 L18.30 215.22 L18.18 215.68 L18.02 216.13 L17.83 216.57 L17.62 216.99 L17.37 217.41 L17.10 217.81 L16.81 218.19 L16.48 218.56" fill="none" stroke="#2a2a2a" stroke-width="0.85"/><path d="M0 226.5 H24" stroke="#dbd8d5" stroke-width="0.8"/><defs><linearGradient id="gpn" x1="0" y1="0" x2="1" y2="0.4"><stop offset="0" stop-color="#b4daf6"/><stop offset="1" stop-color="#2a78be"/></linearGradient></defs><path d="M4.8 233.8 H12.6 M5.2 234 Q8.8 237.6 9.6 242.8 M12.4 234 Q10.4 238.4 10.6 244.4 M6.4 245.4 H11.4" fill="none" stroke="#3a3a3a" stroke-width="0.7"/><circle cx="5.5" cy="245.3" r="1" fill="#f6f5f4" stroke="#222" stroke-width="0.6"/><path d="M14.6 232.3 L18.7 234.8 L16.2 239.5 L12.6 237.6 Z" fill="url(#gpn)" stroke="#2a5a8a" stroke-width="0.3"/><path d="M12.6 237.6 L16.2 239.5 L15.4 240.8 L12.1 239.1 Z" fill="#e9a21e"/><path d="M12.1 239.1 L15.4 240.8 L11.1 245.8 Z" fill="#141414"/><path d="M5.2 254 Q6.6 252 7.6 253.4 Q7.6 256 5.4 258 L8.2 257.8" fill="none" stroke="#444" stroke-width="0.6"/><path d="M8.2 258.2 Q7.4 264.4 11 265 Q15.4 265.2 17.2 260.6" fill="none" stroke="#222" stroke-width="0.75"/><path d="M14.8 251.8 L17.9 254.2 L13.6 261.6 L10.8 264.4 L10.9 260.2 Z" fill="#f6c11a" stroke="#3a3a3a" stroke-width="0.4"/><path d="M14.8 251.8 L16.2 252.9 L12 260.8 L10.9 260.2 Z" fill="#ffe867"/><path d="M16.4 253 L17.9 254.2 L13.6 261.6 L12.6 261 Z" fill="#e8920e"/><path d="M10.9 260.2 L13.6 261.6 L10.8 264.4 Z" fill="#fbf3da"/><path d="M11.4 262.6 L12 263.2 L10.8 264.4 Z" fill="#111"/><path d="M4.6 271.6 Q10.2 271.2 9.4 276.4 Q8.2 281.6 10.4 283.6 L9.6 284.8 Q5 283.4 5.8 277.4 Q6.4 273.6 4.6 271.6 Z" fill="#000"/><path d="M9.8 284.2 Q14.4 285.4 18.2 282" fill="none" stroke="#000" stroke-width="1"/><path d="M10.2 281.6 L11.6 276 L14 272.8 L17 274.8 L14.8 278.8 Z" fill="#f6d24c" stroke="#1c1c1c" stroke-width="0.5"/><path d="M12 276.4 L13.4 274.6 L14.2 277 Z" fill="#fdf6cf"/><path d="M14 272.8 L15.2 271.2 L18.1 273 L17 274.8 Z" fill="#c21e1e"/><path d="M15.2 271.2 L16 270.2 L18.8 271.8 L18.1 273 Z" fill="#3d7fd0"/><circle cx="13.4" cy="277.6" r="0.75" fill="#1c1c1c"/><text x="5.2" y="302.8" font-size="14.2" font-weight="bold" fill="#000" stroke="#000" stroke-width="0.55" font-family="Liberation Sans,sans-serif">A</text><path d="M15.8 291.2 H17.8 M16.8 291.2 V303.8 M15.8 303.8 H17.8" stroke="#777" stroke-width="0.5" fill="none"/><path d="M0 311.5 H24" stroke="#dbd8d5" stroke-width="0.8"/><rect x="5" y="318.3" width="12.7" height="12.7" fill="url(#gg)"/><path d="M8 321.6 L15 328.2" stroke="#333" stroke-width="0.6"/><circle cx="7.8" cy="321.4" r="1.2" fill="#cfd8d0" stroke="#333" stroke-width="0.5"/><rect x="14" y="327.2" width="2.2" height="2.2" fill="#e8efe9" stroke="#333" stroke-width="0.5"/><path d="M10.4 351 V356.6 L13.4 353.8 Z" fill="#2e3436"/></svg>
<svg style="left:0;top:0" width="600" height="401" viewBox="0 0 600 401"><rect x="580" y="79.4" width="24" height="19.4" rx="2" fill="#d6d2ce"/><path d="M587.65 86.55000000000001 L593.05 91.95" stroke="#111" stroke-width="0.9"/><path d="M589.85 90.75 L591.85 88.75 L592.25 91.15 Z" fill="#111"/><circle cx="587.25" cy="86.15" r="1.25" fill="#dfe2ff" stroke="#2020e6" stroke-width="0.9"/><circle cx="593.45" cy="92.35000000000001" r="1.3" fill="#9fd2ac" stroke="#2c8a4a" stroke-width="0.9"/><path d="M580 103.5 H600" stroke="#dbd8d5" stroke-width="0.8"/><path d="M587.65 114.30000000000001 L593.05 119.7" stroke="#111" stroke-width="0.9"/><path d="M589.85 118.5 L591.85 116.5 L592.25 118.9 Z" fill="#111"/><circle cx="587.25" cy="113.9" r="1.25" fill="#dfe2ff" stroke="#2020e6" stroke-width="0.9"/><circle cx="593.45" cy="120.10000000000001" r="1.3" fill="#9fd2ac" stroke="#2c8a4a" stroke-width="0.9"/><path d="M593.2 132 V139.8 H586" fill="none" stroke="#dde3de" stroke-width="0.6"/><path d="M593.3 152.4 V163.8 M586 159.6 H595" fill="none" stroke="#dde3de" stroke-width="0.6"/><circle cx="593.3" cy="159.6" r="1.1" fill="#c4dccb"/><path d="M593.3 171.4 V179.5 H586" fill="none" stroke="#dde3de" stroke-width="0.6"/><circle cx="593.3" cy="174.4" r="1.1" fill="#c4dccb"/><path d="M593.5 191.6 V199.5 H586" fill="none" stroke="#dde3de" stroke-width="0.6"/><circle cx="588" cy="194.2" r="1.1" fill="#c4dccb"/><path d="M580 210.5 H600" stroke="#dbd8d5" stroke-width="0.8"/><rect x="580" y="214.8" width="24" height="19" rx="2" fill="#d6d2ce"/><path d="M587.6999999999999 221.70000000000002 L593.0999999999999 227.10000000000002" stroke="#111" stroke-width="0.9"/><path d="M589.9 225.9 L591.9 223.9 L592.3 226.3 Z" fill="#111"/><circle cx="587.3" cy="221.3" r="1.25" fill="#dfe2ff" stroke="#2020e6" stroke-width="0.9"/><circle cx="593.5" cy="227.5" r="1.3" fill="#9fd2ac" stroke="#2c8a4a" stroke-width="0.9"/><path d="M586 240.3 Q592.6 241 592.4 246.8" fill="none" stroke="#2c8f40" stroke-width="1.05"/><path d="M589.6 245.4 L591.7 247.9 L594.9 244.3" fill="none" stroke="#2c8f40" stroke-width="1.05"/><path d="M586.4 267.6 L594.6 260.2" stroke="#555" stroke-width="0.55"/><path d="M586.2 265.2 Q590 264 594.6 262.2" stroke="#555" stroke-width="0.55" fill="none"/><ellipse cx="590.3" cy="264" rx="1.7" ry="1.1" fill="#2c8f40" transform="rotate(-35 590.3 264)"/><rect x="580" y="274.3" width="24" height="19.4" rx="2" fill="#d6d2ce"/><path d="M585.8 279.4 Q592.8 280.4 592.8 287.4" fill="none" stroke="#222" stroke-width="0.6"/><path d="M590.6 285 L592.7 288.2 L594.8 284.8" fill="none" stroke="#222" stroke-width="0.6"/><rect x="588.8" y="285.4" width="2.8" height="2.8" fill="#2c8f40" transform="rotate(45 590.2 286.8)"/><path d="M586 299.4 L590.4 301.2 Q592.8 303.4 592.4 306.8" fill="none" stroke="#333" stroke-width="0.6"/><path d="M590.4 304.2 L592.3 307.4 L594.6 304" fill="none" stroke="#333" stroke-width="0.6"/><rect x="588.6" y="299.8" width="2.8" height="2.8" fill="#2c8f40"/><path d="M586.4 327.6 L594.2 319.4" stroke="#e0364a" stroke-width="1.5"/><circle cx="590.4" cy="323.4" r="1.35" fill="#2c8f40"/><path d="M580 337.5 H600" stroke="#dbd8d5" stroke-width="0.8"/><path d="M588.6 350.6 V356.6 L591.8 353.6 Z" fill="#2e3436"/></svg>
<svg style="left:0;top:0" width="600" height="401" viewBox="0 0 600 401"><rect x="0" y="365.7" width="8.65" height="10.7" fill="#fff"/><path d="M-2.6 365.9 L8.450000000000001 376.2 M8.450000000000001 365.9 L-2.6 376.2" stroke="#8a1010" stroke-width="1.15"/><rect x="8.65" y="365.7" width="11.80" height="10.7" fill="#000000"/><rect x="19.45" y="365.7" width="11.80" height="10.7" fill="#1a1a1a"/><rect x="30.25" y="365.7" width="11.80" height="10.7" fill="#333333"/><rect x="41.05" y="365.7" width="11.80" height="10.7" fill="#4d4d4d"/><rect x="51.85" y="365.7" width="11.80" height="10.7" fill="#666666"/><rect x="62.65" y="365.7" width="11.80" height="10.7" fill="#808080"/><rect x="73.45" y="365.7" width="11.80" height="10.7" fill="#999999"/><rect x="84.25" y="365.7" width="11.80" height="10.7" fill="#b3b3b3"/><rect x="95.05" y="365.7" width="11.80" height="10.7" fill="#cccccc"/><rect x="105.85" y="365.7" width="11.80" height="10.7" fill="#e6e6e6"/><rect x="116.65" y="365.7" width="11.80" height="10.7" fill="#ececec"/><rect x="127.45" y="365.7" width="11.80" height="10.7" fill="#f2f2f2"/><rect x="138.25" y="365.7" width="11.80" height="10.7" fill="#f9f9f9"/><rect x="149.05" y="365.7" width="11.80" height="10.7" fill="#ffffff"/><rect x="159.85" y="365.7" width="11.80" height="10.7" fill="#800000"/><rect x="170.65" y="365.7" width="11.80" height="10.7" fill="#ff0000"/><rect x="181.45" y="365.7" width="11.80" height="10.7" fill="#808000"/><rect x="192.25" y="365.7" width="11.80" height="10.7" fill="#ffff00"/><rect x="203.05" y="365.7" width="11.80" height="10.7" fill="#008000"/><rect x="213.85" y="365.7" width="11.80" height="10.7" fill="#00ff00"/><rect x="224.65" y="365.7" width="11.80" height="10.7" fill="#008080"/><rect x="235.45" y="365.7" width="11.80" height="10.7" fill="#00ffff"/><rect x="246.25" y="365.7" width="11.80" height="10.7" fill="#000080"/><rect x="257.05" y="365.7" width="11.80" height="10.7" fill="#0000ff"/><rect x="267.85" y="365.7" width="11.80" height="10.7" fill="#800080"/><rect x="278.65" y="365.7" width="11.80" height="10.7" fill="#ff00ff"/><rect x="289.45" y="365.7" width="11.80" height="10.7" fill="#2b0000"/><rect x="300.25" y="365.7" width="11.80" height="10.7" fill="#550000"/><rect x="311.05" y="365.7" width="11.80" height="10.7" fill="#800000"/><rect x="321.85" y="365.7" width="11.80" height="10.7" fill="#aa0000"/><rect x="332.65" y="365.7" width="11.80" height="10.7" fill="#d40000"/><rect x="343.45" y="365.7" width="11.80" height="10.7" fill="#ff0000"/><rect x="354.25" y="365.7" width="11.80" height="10.7" fill="#ff2a2a"/><rect x="365.05" y="365.7" width="11.80" height="10.7" fill="#ff5555"/><rect x="375.85" y="365.7" width="11.80" height="10.7" fill="#ff8080"/><rect x="386.65" y="365.7" width="11.80" height="10.7" fill="#ffaaaa"/><rect x="397.45" y="365.7" width="11.80" height="10.7" fill="#ffd5d5"/><rect x="408.25" y="365.7" width="11.80" height="10.7" fill="#280b0b"/><rect x="419.05" y="365.7" width="11.80" height="10.7" fill="#501616"/><rect x="429.85" y="365.7" width="11.80" height="10.7" fill="#782121"/><rect x="440.65" y="365.7" width="11.80" height="10.7" fill="#a02c2c"/><rect x="451.45" y="365.7" width="11.80" height="10.7" fill="#c83737"/><rect x="462.25" y="365.7" width="11.80" height="10.7" fill="#d35f5f"/><rect x="473.05" y="365.7" width="11.80" height="10.7" fill="#de8787"/><rect x="483.85" y="365.7" width="11.80" height="10.7" fill="#e9afaf"/><rect x="494.65" y="365.7" width="11.80" height="10.7" fill="#f4d7d7"/><rect x="505.45" y="365.7" width="11.80" height="10.7" fill="#241c1c"/><rect x="516.25" y="365.7" width="11.80" height="10.7" fill="#483737"/><rect x="527.05" y="365.7" width="11.80" height="10.7" fill="#6c5353"/><rect x="537.85" y="365.7" width="11.80" height="10.7" fill="#916f6f"/><rect x="548.65" y="365.7" width="11.80" height="10.7" fill="#ac9393"/><rect x="559.45" y="365.7" width="11.80" height="10.7" fill="#c8b7b7"/><rect x="570.25" y="365.7" width="10.80" height="10.7" fill="#e3dbdb"/><rect x="0" y="376.4" width="581.45" height="8.6" fill="#cfcfcf"/><rect x="580.95" y="365.7" width="0.6" height="10.7" fill="#555"/><rect x="-3" y="379.2" width="71.8" height="3.8" rx="1.9" fill="#7c8182"/><path d="M595 372 V378 L591.6 375 Z" fill="#2e3436"/></svg>
<div class="t " style="left:-1.5px;top:385.9px;font-size:6.7px;color:#2e3436;">填充:</div>
<div class="t " style="left:34.8px;top:385.6px;font-size:6.7px;color:#2e3436;transform:skewX(-18deg);">无</div>
<div class="t " style="left:-1.5px;top:394.8px;font-size:6.7px;color:#2e3436;">描边:</div>
<div class="a" style="left:22.8px;top:395.4px;width:28.2px;height:8px;background:#000"></div>
<div class="t " style="left:56px;top:394.8px;font-size:6.7px;color:#2e3436;">0.265</div>
<div class="t " style="left:76.5px;top:390.1px;font-size:7.0px;color:#2e3436;">O:</div>
<div class="sp" style="left:85px;top:385.8px;width:38.6px;height:19px"></div><div class="t " style="left:87.3px;top:390.0px;font-size:7.49px;color:#15191b;transform:scaleX(0.935);transform-origin:0 50%;-webkit-text-stroke:0.18px #15191b;">100</div><div class="vs" style="left:102.8px;top:386.3px;height:18px;background:#f0eeec"></div><div class="vs" style="left:113px;top:386.3px;height:18px;background:#f0eeec"></div><div class="a" style="left:105.2px;top:394.55px;width:6px;height:0.95px;background:#222628"></div><div class="a" style="left:115px;top:394.55px;width:6px;height:0.95px;background:#c8c8c8"></div><div class="a" style="left:117.53px;top:392.02000000000004px;width:0.95px;height:6px;background:#c8c8c8"></div>
<div class="vs" style="left:139.8px;top:388px;height:13px;background:#e4e1de"></div>
<svg style="left:145.3px;top:390.8px" width="10.4" height="7.8" viewBox="0 0 10.4 7.8"><path d="M0.4 4.8 Q5.2 0.2 10 4.8 Q5.2 8.6 0.4 4.8 Z" fill="#fff" stroke="#000" stroke-width="0.9"/><circle cx="5.2" cy="4.7" r="2.2" fill="#000"/>
<path d="M2.2 2.2 L1.4 0.6 M4.1 1.4 L3.8 -0.2 M6.3 1.4 L6.6 -0.2 M8.2 2.2 L9 0.6" stroke="#000" stroke-width="0.7"/></svg>
<svg style="left:167.6px;top:390.0px" width="8" height="9.6" viewBox="0 0 8 9.6"><path d="M3.4 4.8 V2.9 Q3.4 0.7 5.3 0.7 Q7.2 0.7 7.2 2.9 V3.8" fill="none" stroke="#151515" stroke-width="1"/>
<rect x="0.5" y="4.6" width="5.9" height="4.5" rx="0.5" fill="#fffbe6" stroke="#151515" stroke-width="0.75"/><rect x="1.3" y="6.7" width="4.3" height="1.8" fill="#f2cb45"/></svg>
<div class="a" style="left:181.4px;top:385.8px;width:42.2px;height:19px;background:#f9f8f7;border:0.5px solid #cdc7c2;border-radius:2px;box-sizing:border-box"></div>
<div class="t " style="left:188.8px;top:390.4px;font-size:5.8px;color:#2e3436;font-weight:bold;">-图层 1</div>
<svg style="left:210.8px;top:393.6px" width="6.4" height="3.6" viewBox="0 0 6.4 3.6"><path d="M0 0 H6.4 L3.2 3.6 Z" fill="#2e3436"/></svg>
<div class="t " style="left:225.2px;top:390.8px;font-size:6.75px;color:#2e3436;word-spacing:0.55px;"><b style="letter-spacing:-0.15px">Ctrl</b>:吸附角度; ; <b style="letter-spacing:0.6px">Alt</b>:锁定螺旋半径</div>
<div class="vs" style="left:392.8px;top:388px;height:13px"></div>
<div class="t " style="left:398.9px;top:385.7px;font-size:6.9px;color:#2e3436;">X:</div>
<div class="t " style="left:398.9px;top:395.1px;font-size:6.9px;color:#2e3436;">Y:</div>
<div class="t " style="left:415px;top:385.7px;font-size:7.15px;color:#2e3436;">42.43</div>
<div class="t " style="left:415px;top:395.1px;font-size:7.15px;color:#2e3436;">73.15</div>
<div class="t " style="left:438px;top:390.2px;font-size:6.8px;color:#2e3436;">缩放:</div>
<div class="sp" style="left:459.6px;top:385.8px;width:53.2px;height:19px"></div><div class="t " style="left:467.20000000000005px;top:390.0px;font-size:7.597px;color:#15191b;transform:scaleX(0.935);transform-origin:0 50%;-webkit-text-stroke:0.18px #15191b;">54%</div><div class="vs" style="left:487.7px;top:386.3px;height:18px;background:#f0eeec"></div><div class="vs" style="left:499.8px;top:386.3px;height:18px;background:#f0eeec"></div><div class="a" style="left:490.7px;top:394.55px;width:6px;height:0.95px;background:#222628"></div><div class="a" style="left:502.4px;top:394.55px;width:6px;height:0.95px;background:#222628"></div><div class="a" style="left:504.92999999999995px;top:392.02000000000004px;width:0.95px;height:6px;background:#222628"></div>
<div class="t " style="left:518.8px;top:390.2px;font-size:6.8px;color:#2e3436;">旋转:</div>
<div class="sp" style="left:540.6px;top:385.8px;width:62px;height:19px"></div><div class="t " style="left:548.2px;top:390.0px;font-size:7.704000000000001px;color:#15191b;transform:scaleX(0.935);transform-origin:0 50%;-webkit-text-stroke:0.18px #15191b;">0.00°</div><div class="vs" style="left:572.4px;top:386.3px;height:18px;background:#f0eeec"></div><div class="vs" style="left:584px;top:386.3px;height:18px;background:#f0eeec"></div><div class="a" style="left:575.2px;top:394.55px;width:6px;height:0.95px;background:#222628"></div><div class="a" style="left:586.6px;top:394.55px;width:6px;height:0.95px;background:#222628"></div><div class="a" style="left:589.13px;top:392.02000000000004px;width:0.95px;height:6px;background:#222628"></div>
</div></body></html>
